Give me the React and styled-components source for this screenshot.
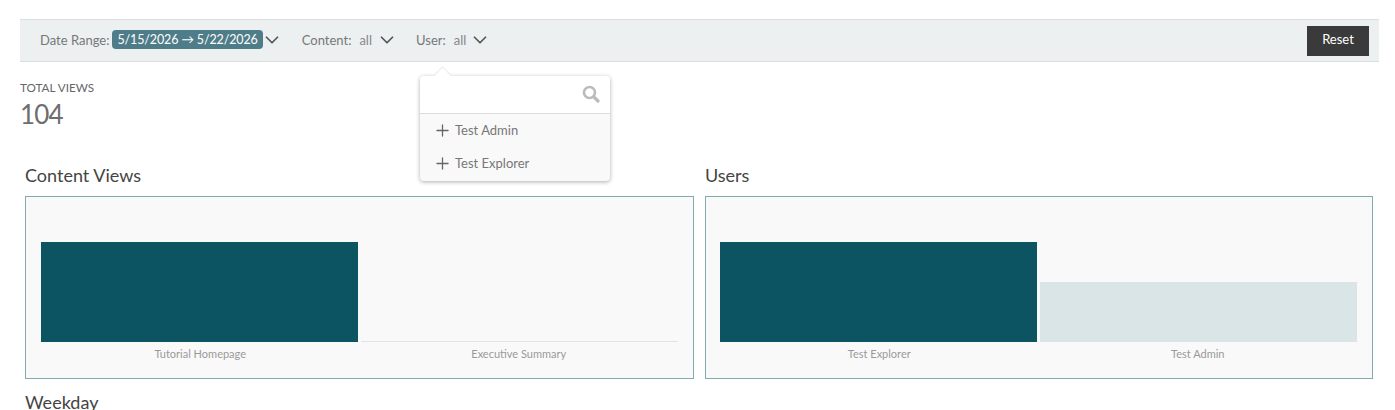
import React from 'react';
import styled, { createGlobalStyle } from 'styled-components';
import { ChevronDown, Plus } from 'lucide-react';

const GlobalStyle = createGlobalStyle`
  html, body {
    margin: 0;
    height: 100%;
    overflow: hidden;
    background: #fff;
    font-family: "Lato", "Liberation Sans", sans-serif;
    color: #666;
  }
  * { box-sizing: border-box; }
`;

const Page = styled.div`
  width: 1395px;
  height: 410px;
  padding: 19px 16px 0 20px;
  overflow: hidden;
`;

const Toolbar = styled.div`
  height: 43px;
  display: flex;
  align-items: center;
  padding: 0 10px 0 20px;
  background: #ecf0f1;
  border-top: 1px solid #dcdfdf;
  border-bottom: 1px solid #dcdfdf;
  font-size: 13px;
`;

const Filter = styled.div`
  position: relative;
  display: flex;
  align-items: center;
  margin-bottom: 2px;
  margin-right: ${(p) => p.$gap}px;
  color: #777;
`;

const FilterValue = styled.span`
  margin-left: 8px;
  color: #888;
`;

const DateBadge = styled.span`
  margin-left: 3px;
  height: 19px;
  padding: 0 5px;
  display: flex;
  align-items: center;
  background: #4e7c88;
  border-radius: 4px;
  color: #fff;
  font-size: 12.5px;
  letter-spacing: -0.13px;
`;

const Caret = styled(ChevronDown)`
  margin-left: ${(p) => p.$gap}px;
  color: #555;
`;

const ResetButton = styled.button`
  margin-left: auto;
  width: 62px;
  height: 30px;
  padding: 0 0 4px;
  border: 0;
  background: #3a3a3a;
  color: #fff;
  font: inherit;
`;

const Popover = styled.div`
  position: absolute;
  top: 47px;
  left: 4px;
  z-index: 2;
  width: 190px;
  height: 105px;
  background: #f9f9f9;
  border-radius: 4px;
  box-shadow: 0 1px 4px rgba(0, 0, 0, 0.32);

  &::before {
    content: '';
    position: absolute;
    top: -6px;
    left: 17px;
    width: 11px;
    height: 11px;
    background: #fff;
    transform: rotate(45deg);
    box-shadow: -1px -1px 1px rgba(0, 0, 0, 0.08);
  }
`;

const PopoverSearch = styled.div`
  position: relative;
  height: 38px;
  display: flex;
  align-items: center;
  justify-content: flex-end;
  padding-right: 10px;
  background: #fff;
  border-bottom: 1px solid #dcdcdc;
  border-radius: 4px 4px 0 0;
  color: #bbb;
`;

const PopoverItem = styled.div`
  height: 33px;
  display: flex;
  align-items: center;
  padding-left: 13px;
  gap: 3px;
  font-size: 13px;
  color: #777;

  svg { color: #666; }
`;

const Stat = styled.div`
  margin-top: 18px;
  height: 86px;
`;

const StatLabel = styled.div`
  font-size: 11.7px;
  line-height: 14px;
  color: #666;
`;

const StatValue = styled.div`
  margin-top: 4px;
  font-size: 26px;
  letter-spacing: -0.8px;
  line-height: 32px;
  color: #6e6e6e;
`;

const ChartGrid = styled.div`
  display: grid;
  grid-template-columns: 669px 668px;
  column-gap: 11px;
  margin-left: 5px;
`;

const ChartTitle = styled.h2`
  margin: 0;
  height: 30px;
  font-size: 18px;
  line-height: 18px;
  font-weight: 400;
  color: #444;
`;

const ChartPanel = styled.div`
  height: 183px;
  padding: 45px 15px 0 ${(p) => p.$inset}px;
  background: #f9f9f9;
  border: 1px solid #83a9b1;
`;

const Plot = styled.div`
  display: grid;
  grid-template-columns: 1fr 1fr;
`;

const BarColumn = styled.div`
  display: flex;
  flex-direction: column;
  min-width: 0;
`;

const BarSlot = styled.div`
  height: 100px;
  display: flex;
  align-items: flex-end;
  padding: 0 1.5px 0 0;
  ${(p) => p.$second && 'padding: 0 0 0 1.5px;'}
`;

const Bar = styled.div`
  width: 100%;
  background: ${(p) => p.$color};
`;

const BarLabel = styled.div`
  margin-top: 5px;
  text-align: center;
  font-size: 11px;
  line-height: 13px;
  color: #999;
`;

const BottomTitle = styled(ChartTitle)`
  margin: 14px 0 0 5px;
`;

const charts = [
  {
    title: 'Content Views',
    inset: 15,
    bars: [
      { label: 'Tutorial Homepage', value: 100, color: '#0d5462' },
      { label: 'Executive Summary', value: 1, color: '#dde5e7' },
    ],
  },
  {
    title: 'Users',
    inset: 14,
    bars: [
      { label: 'Test Explorer', value: 100, color: '#0d5462' },
      { label: 'Test Admin', value: 60, color: '#dae5e7' },
    ],
  },
];

const users = ['Test Admin', 'Test Explorer'];

function SearchIcon() {
  return (
    <svg width="18" height="18" viewBox="0 0 18 18" fill="none" stroke="currentColor">
      <circle cx="7.5" cy="7.5" r="5.5" strokeWidth="2.6" />
      <line x1="11.8" y1="11.8" x2="16" y2="16" strokeWidth="3.2" strokeLinecap="round" />
    </svg>
  );
}

export default function App() {
  return (
    <Page>
      <GlobalStyle />
      <Toolbar>
        <Filter $gap={18.5}>
          Date Range:
          <DateBadge>5/15/2026 → 5/22/2026</DateBadge>
          <Caret size={22} strokeWidth={1.9} $gap={-1.5} />
        </Filter>
        <Filter $gap={18.5}>
          Content:
          <FilterValue>all</FilterValue>
          <Caret size={22} strokeWidth={1.9} $gap={3.5} />
        </Filter>
        <Filter>
          User:
          <FilterValue>all</FilterValue>
          <Caret size={22} strokeWidth={1.9} $gap={3} />
          <Popover>
            <PopoverSearch>
              <SearchIcon />
            </PopoverSearch>
            {users.map((name) => (
              <PopoverItem key={name}>
                <Plus size={19} strokeWidth={1.6} />
                {name}
              </PopoverItem>
            ))}
          </Popover>
        </Filter>
        <ResetButton>Reset</ResetButton>
      </Toolbar>
      <Stat>
        <StatLabel>TOTAL VIEWS</StatLabel>
        <StatValue>104</StatValue>
      </Stat>
      <ChartGrid>
        {charts.map((chart) => (
          <div key={chart.title}>
            <ChartTitle>{chart.title}</ChartTitle>
            <ChartPanel $inset={chart.inset}>
              <Plot>
                {chart.bars.map((bar, i) => (
                  <BarColumn key={bar.label}>
                    <BarSlot $second={i > 0}>
                      <Bar $color={bar.color} style={{ height: bar.value + 'px' }} />
                    </BarSlot>
                    <BarLabel>{bar.label}</BarLabel>
                  </BarColumn>
                ))}
              </Plot>
            </ChartPanel>
          </div>
        ))}
      </ChartGrid>
      <BottomTitle>Weekday</BottomTitle>
    </Page>
  );
}
